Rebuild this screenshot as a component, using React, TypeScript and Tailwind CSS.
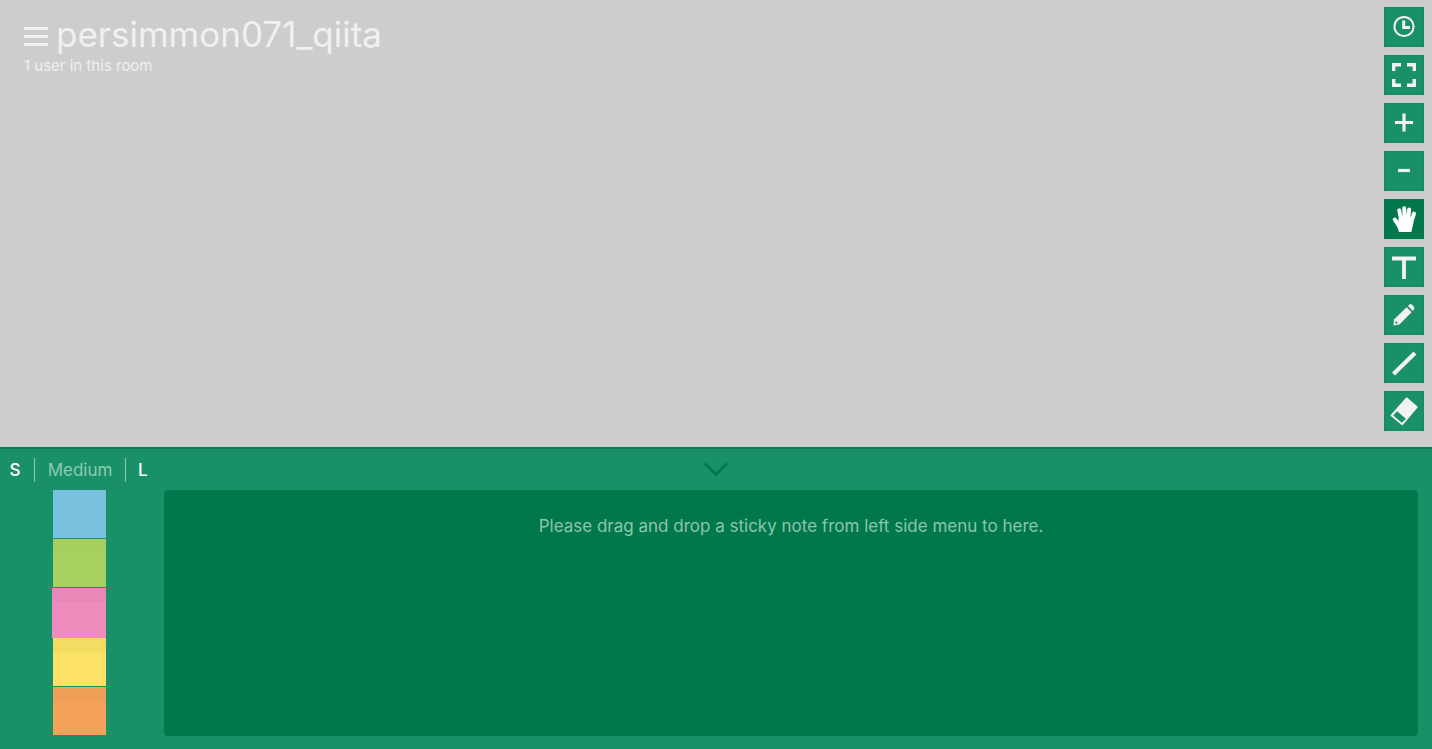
import React, { useState } from "react";

type Tool = { label: string; icon: React.ReactNode };

const stroke = { fill: "none", stroke: "currentColor" };

const tools: Tool[] = [
  {
    label: "History",
    icon: (
      <>
        <circle cx="20" cy="19.5" r="9.6" {...stroke} strokeWidth="2" />
        <path d="M19.7 13.5V20.4H26" {...stroke} strokeWidth="3" />
      </>
    ),
  },
  {
    label: "Full screen",
    icon: <path d="M9.7 16V9.7H17M23 9.7h7.3V16M30.3 24v6.3H23M17 30.3H9.7V24" {...stroke} strokeWidth="3.4" />,
  },
  { label: "Zoom in", icon: <path d="M11 19.5H29M20 10.5V28.5" {...stroke} strokeWidth="3.2" /> },
  { label: "Zoom out", icon: <path d="M14 19.5H26" {...stroke} strokeWidth="3.2" /> },
  {
    label: "Move",
    icon: (
      <>
        <path d="M15 33L13.4 28 14.8 18H28.2L29.4 24 27.4 33Z" fill="#fff" />
        <path
          d="M16.2 28.5L10.8 20.6M17.2 20.5L15.2 11.4M20.8 20L20.2 9.2M24.2 20.5L25.2 10.4M27 24L30 14.6"
          fill="none"
          stroke="#fff"
          strokeWidth="4"
          strokeLinecap="round"
        />
      </>
    ),
  },
  {
    label: "Text",
    icon: <path d="M8 11.5H32M20 11.5V32" {...stroke} strokeWidth="3.8" />,
  },
  {
    label: "Pencil",
    icon: (
      <>
        <path d="M22.6 12.3L27.6 17.3 15.4 29.5 9.4 30.4 10 24.6Z" fill="currentColor" />
        <path d="M24 11L25.3 9.6Q26.6 8.5 28 9.8L29.9 11.7Q31.1 13 29.9 14.5L28.8 15.9Z" fill="currentColor" />
        <path d="M11.5 25.8L14 28.3 11.3 28.8Z" fill="#1a9068" />
      </>
    ),
  },
  { label: "Line", icon: <path d="M9.5 31L31 10" {...stroke} strokeWidth="4.2" /> },
  {
    label: "Eraser",
    icon: (
      <>
        <path d="M22.5 7.2L33 16 18.2 33.4 7.3 24.5Z" fill="currentColor" stroke="currentColor" strokeWidth="1.6" strokeLinejoin="round" />
        <path d="M13 20.2L22 27.8 17.8 31.8 9.2 24.5Z" fill="#1a9068" />
      </>
    ),
  },
];

const notes = [
  { name: "Blue", color: "h-12 bg-[#7ac3e0]", shade: "bg-[#78c1df]" },
  { name: "Green", color: "h-12 bg-[#a9d161]", shade: "bg-[#a6cf60]" },
  { name: "Pink", color: "-ml-px -mb-px h-[50px] bg-[#f08bbe]", shade: "bg-[#e888b8]" },
  { name: "Yellow", color: "h-12 bg-[#fbe267]", shade: "bg-[#f4dc63]" },
  { name: "Orange", color: "h-12 bg-[#f4a15a]", shade: "bg-[#f09f59]" },
];

export default function App() {
  const [active, setActive] = useState("Move");
  return (
    <div className="flex min-h-screen flex-col bg-[#cdcdcd] font-['Inter','Liberation_Sans',sans-serif]">
      <main className="flex flex-1 items-start justify-between">
        <header className="pt-4 pl-6 text-[#f0f0f0]">
          <div className="flex items-start gap-2">
            <button type="button" aria-label="Open menu" className="pt-2">
              <svg width="24" height="24" viewBox="0 0 24 24" className="block">
                <path d="M0 4.5H24M0 12.5H24M0 20.5H24" fill="none" stroke="currentColor" strokeWidth="3" />
              </svg>
            </button>
            <h1 className="text-[35px] leading-9">persimmon071_qiita</h1>
          </div>
          <p className="pt-1 text-[15px] leading-5">1 user in this room</p>
        </header>
        <nav aria-label="Tools" className="flex flex-col gap-2 pt-[7px] pr-2 pb-4">
          {tools.map((tool) => (
            <button
              key={tool.label}
              type="button"
              aria-label={tool.label}
              aria-pressed={active === tool.label}
              onClick={() => setActive(tool.label)}
              className={
                "size-10 text-[#f2f2f2] " +
                (active === tool.label
                  ? "bg-[#00784c]"
                  : "bg-[#1a9068] shadow-[inset_0_0_0_1px_#158a61]")
              }
            >
              <svg viewBox="0 0 40 40" className="block size-10">
                {tool.icon}
              </svg>
            </button>
          ))}
        </nav>
      </main>

      <section aria-label="Sticky notes" className="border-t-2 border-[#0e7b55] bg-[#1a9068] pr-3.5 pb-[13px]">
        <div className="grid grid-cols-[164px_1fr]">
          <div className="flex h-[41px] items-center text-[17px] leading-6 text-white">
            <button type="button" aria-label="Small" className="h-6 w-[34px] pr-1 text-center font-medium">
              S
            </button>
            <button type="button" className="h-6 w-[92px] border-x border-[#8fc9b3] text-[#8ccbb2]">
              Medium
            </button>
            <button type="button" aria-label="Large" className="h-6 pl-3 font-medium">
              L
            </button>
          </div>
          <button type="button" aria-label="Collapse panel" className="mr-[150px] flex items-center justify-center text-[#00784c]">
            <svg width="24" height="16" viewBox="0 0 24 16">
              <path d="M1 1.5L12 12.5L23 1.5" fill="none" stroke="currentColor" strokeWidth="2.8" />
            </svg>
          </button>
          <ul className="ml-[53px] flex w-[53px] flex-col gap-px">
            {notes.map((note) => (
              <li key={note.name} aria-label={note.name} draggable className={note.color}>
                <div className={"h-3.5 " + note.shade} />
              </li>
            ))}
          </ul>
          <div className="min-h-[246px] rounded-sm bg-[#00784c] pt-6 text-center text-[17px] leading-6 text-[#8ac6ab]">
            Please drag and drop a sticky note from left side menu to here.
          </div>
        </div>
      </section>
    </div>
  );
}
